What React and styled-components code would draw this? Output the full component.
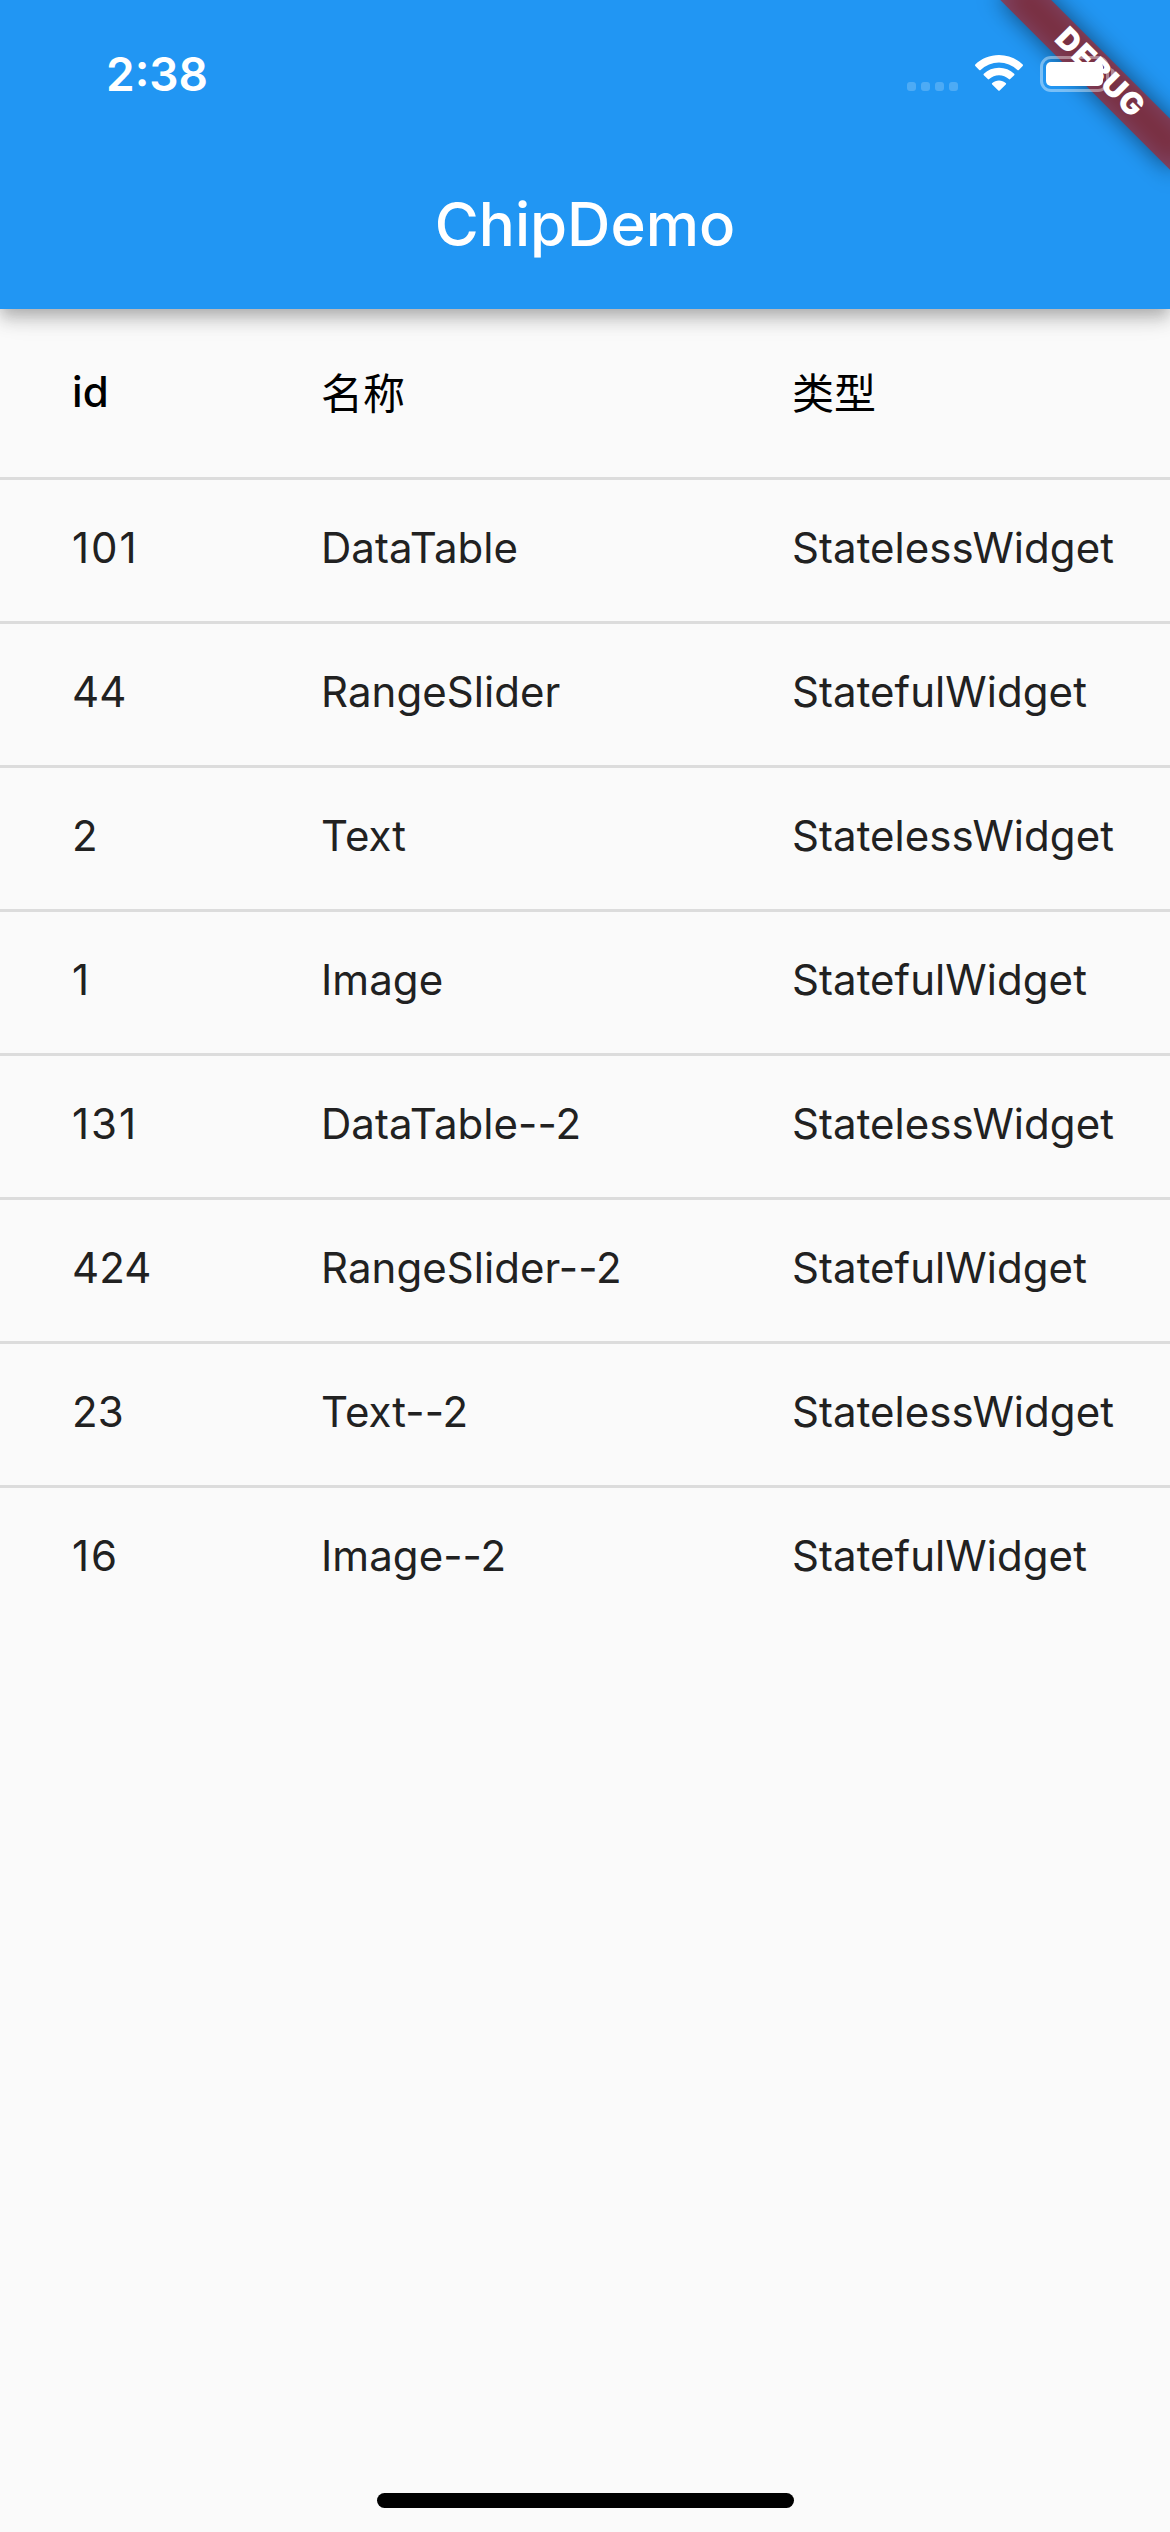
import React from "react";
import styled, { createGlobalStyle, css } from "styled-components";

const GlobalStyle = createGlobalStyle`
  * { box-sizing: border-box; }
  body {
    margin: 0;
    background: #fafafa;
    font-family: Inter, "Noto Sans CJK SC", sans-serif;
  }
`;

const Screen = styled.div`
  width: 1170px;
  height: 2532px;
  display: flex;
  flex-direction: column;
  position: relative;
  overflow: hidden;
  background: #fafafa;
`;

const AppBar = styled.header`
  flex: none;
  height: 309px;
  background: #2196f3;
  box-shadow: 0 6px 12px -3px rgba(0, 0, 0, 0.13),
    0 12px 15px 0 rgba(0, 0, 0, 0.14), 0 3px 30px 0 rgba(0, 0, 0, 0.12);
`;

const StatusBar = styled.div`
  height: 141px;
  padding: 0 55px 0 106px;
  display: flex;
  justify-content: space-between;
`;

const Clock = styled.time`
  padding-top: 46px;
  color: #fff;
  font-size: 46px;
  line-height: 56px;
  font-weight: 600;
`;

const StatusIcons = styled.div`
  position: relative;
  z-index: 2;
  display: flex;
  gap: 17px;
  padding-top: 55px;
`;

const Toolbar = styled.div`
  height: 168px;
  padding-bottom: 2px;
  display: flex;
  align-items: center;
  justify-content: center;
`;

const Title = styled.h1`
  margin: 0;
  color: #fff;
  font-size: 60px;
  line-height: 72px;
  font-weight: 500;
`;

const Ribbon = styled.div`
  position: absolute;
  z-index: 1;
  left: 1050px;
  top: 84px;
  width: 240px;
  height: 36px;
  padding: 0 0 4px 4px;
  transform-origin: 120px -84px;
  transform: rotate(45deg);
  display: flex;
  align-items: center;
  justify-content: center;
  color: #fff;
  font-size: 30.6px;
  line-height: 32px;
  font-weight: 900;
  letter-spacing: 1.1px;

  &::before,
  &::after {
    content: "";
    position: absolute;
    inset: 0;
  }

  &::before {
    z-index: -2;
    background: rgba(0, 0, 0, 0.5);
    filter: blur(11.9px);
  }

  &::after {
    z-index: -1;
    background: rgba(183, 28, 28, 0.627);
  }
`;

const Table = styled.div`
  display: flex;
  flex-direction: column;
`;

const Row = styled.div`
  height: ${(p) => (p.$head ? 168 : 144)}px;
  padding: 0 0 ${(p) => (p.$head ? 3 : 6)}px 72px;
  display: grid;
  grid-template-columns: 249px 471px 1fr;
  align-items: center;
  color: ${(p) => (p.$head ? "#000" : "#212121")};
  font-weight: ${(p) => (p.$head ? 500 : 370)};
  ${(p) => !p.$head && css`border-top: 3px solid #dcdcdc;`}
`;

const Cell = styled.div`
  font-size: 42px;
  line-height: 50px;
  white-space: nowrap;
  letter-spacing: ${(p) => p.$spacing ?? 0.06}px;
`;

const HanCell = styled(Cell)`
  padding-top: 4px;
  font-weight: 400;
  letter-spacing: 0;
`;

const HomeIndicator = styled.div`
  width: 417px;
  height: 15px;
  margin: auto auto 24px;
  border-radius: 7.5px;
  background: #000;
`;

const rows = [
  ["101", "DataTable", "StatelessWidget"],
  ["44", "RangeSlider", "StatefulWidget"],
  ["2", "Text", "StatelessWidget"],
  ["1", "Image", "StatefulWidget"],
  ["131", "DataTable--2", "StatelessWidget"],
  ["424", "RangeSlider--2", "StatefulWidget"],
  ["23", "Text--2", "StatelessWidget"],
  ["16", "Image--2", "StatefulWidget"],
];

// The digit 1 is narrow, so numbers that hold it are tracked out.
const tracking = (text) => (/^\d*1\d*$/.test(text) ? 2 : undefined);

const Signal = () => (
  <svg width="51" height="36" viewBox="0 0 51 36" fill="#fff" fillOpacity="0.2">
    {[0, 14, 28, 42].map((x) => (
      <rect key={x} x={x} y="27" width="9" height="9" rx="3" />
    ))}
  </svg>
);

const Wifi = () => (
  <svg width="48" height="36" viewBox="0 0 48 36" fill="#fff">
    <path d="M24 0C33.1 0 41.500 3.500 47.700 9.500Q48.300 10.200 47.700 10.900L43.800 14.900Q43.100 15.500 42.400 14.900A26.500 26.500 0 0 0 5.600 14.900Q4.900 15.500 4.200 14.900L.3 10.900Q-.3 10.200 .3 9.500C6.500 3.500 14.900 0 24 0Z" />
    <path d="M24 12.800C29.900 12.800 35.200 15 39.200 18.800Q39.900 19.500 39.200 20.200L35.200 24.100Q34.500 24.800 33.800 24.100A14.300 14.300 0 0 0 14.200 24.100Q13.500 24.800 12.800 24.100L8.800 20.200Q8.100 19.500 8.800 18.800C12.800 15 18.100 12.800 24 12.800Z" />
    <path d="M24 25.600C26.500 25.600 28.900 26.500 30.700 28Q31.500 28.700 30.800 29.400L24.700 35.500Q24 36.200 23.300 35.500L17.200 29.400Q16.500 28.700 17.300 28C19.100 26.500 21.500 25.600 24 25.600Z" />
  </svg>
);

const Battery = () => (
  <svg width="75" height="38" viewBox="0 -1 75 38">
    <rect x="1.500" y="1.500" width="66" height="33" rx="9.500" fill="none" stroke="#fff" strokeOpacity="0.4" strokeWidth="3" />
    <rect x="6" y="6" width="57" height="24" rx="5" fill="#fff" />
    <path d="M71 12a6.300 6.300 0 0 1 0 12Z" fill="#fff" fillOpacity="0.4" />
  </svg>
);

export default function App() {
  return (
    <>
      <GlobalStyle />
      <Screen>
        <AppBar>
          <StatusBar>
            <Clock>2:38</Clock>
            <StatusIcons>
              <Signal />
              <Wifi />
              <Battery />
            </StatusIcons>
          </StatusBar>
          <Toolbar>
            <Title>ChipDemo</Title>
          </Toolbar>
        </AppBar>
        <Table>
          <Row $head>
            <Cell>id</Cell>
            <HanCell>名称</HanCell>
            <HanCell>类型</HanCell>
          </Row>
          {rows.map((cells) => (
            <Row key={cells[0]}>
              {cells.map((text) => (
                <Cell key={text} $spacing={tracking(text)}>
                  {text}
                </Cell>
              ))}
            </Row>
          ))}
        </Table>
        <HomeIndicator />
        <Ribbon>DEBUG</Ribbon>
      </Screen>
    </>
  );
}
